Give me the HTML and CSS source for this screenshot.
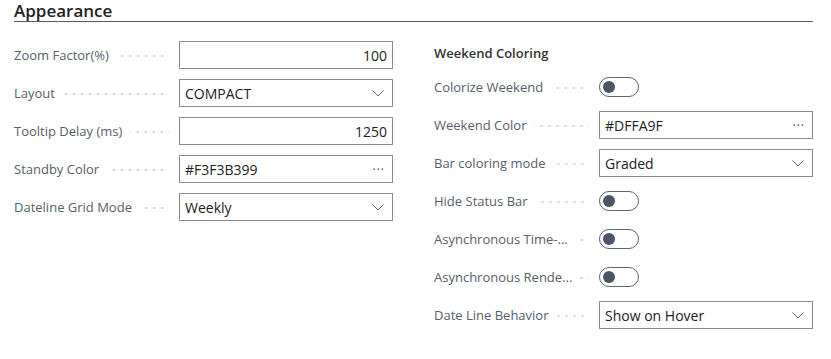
FILE: index.html
```html
<!DOCTYPE html>
<html lang="en">
<head>
    <meta charset="UTF-8">
    <meta name="viewport" content="width=device-width, initial-scale=1.0">
    <title>Appearance</title>
    <link rel="stylesheet" href="styles.css">
</head>
<body>
    <div class="group">
        <h2 class="group-title">Appearance</h2>

        <div class="columns">
            <!-- left column -->
            <div class="column">
                <div class="field">
                    <span class="label">Zoom Factor(%)</span><span class="leader"></span>
                    <div class="box number">100</div>
                </div>
                <div class="field">
                    <span class="label">Layout</span><span class="leader"></span>
                    <div class="box"><span class="value">COMPACT</span><svg class="chevron" width="12" height="7" viewBox="0 0 12 7"><polyline points="0.5,0.5 6,6 11.5,0.5" /></svg></div>
                </div>
                <div class="field">
                    <span class="label">Tooltip Delay (ms)</span><span class="leader"></span>
                    <div class="box number">1250</div>
                </div>
                <div class="field">
                    <span class="label">Standby Color</span><span class="leader"></span>
                    <div class="box"><span class="value">#F3F3B399</span><span class="more">···</span></div>
                </div>
                <div class="field">
                    <span class="label">Dateline Grid Mode</span><span class="leader"></span>
                    <div class="box"><span class="value">Weekly</span><svg class="chevron" width="12" height="7" viewBox="0 0 12 7"><polyline points="0.5,0.5 6,6 11.5,0.5" /></svg></div>
                </div>
            </div>

            <!-- right column -->
            <div class="column">
                <h3 class="sub-title">Weekend Coloring</h3>
                <div class="field">
                    <span class="label">Colorize Weekend</span><span class="leader"></span>
                    <div class="toggle-cell"><span class="toggle"></span></div>
                </div>
                <div class="field">
                    <span class="label">Weekend Color</span><span class="leader"></span>
                    <div class="box"><span class="value">#DFFA9F</span><span class="more">···</span></div>
                </div>
                <div class="field">
                    <span class="label">Bar coloring mode</span><span class="leader"></span>
                    <div class="box"><span class="value">Graded</span><svg class="chevron" width="12" height="7" viewBox="0 0 12 7"><polyline points="0.5,0.5 6,6 11.5,0.5" /></svg></div>
                </div>
                <div class="field">
                    <span class="label">Hide Status Bar</span><span class="leader"></span>
                    <div class="toggle-cell"><span class="toggle"></span></div>
                </div>
                <div class="field">
                    <span class="label">Asynchronous Time-...</span><span class="leader"></span>
                    <div class="toggle-cell"><span class="toggle"></span></div>
                </div>
                <div class="field">
                    <span class="label">Asynchronous Rende...</span><span class="leader"></span>
                    <div class="toggle-cell"><span class="toggle"></span></div>
                </div>
                <div class="field">
                    <span class="label">Date Line Behavior</span><span class="leader"></span>
                    <div class="box"><span class="value">Show on Hover</span><svg class="chevron" width="12" height="7" viewBox="0 0 12 7"><polyline points="0.5,0.5 6,6 11.5,0.5" /></svg></div>
                </div>
            </div>
        </div>
    </div>
</body>
</html>
```

FILE: styles.css
```css
body {
    margin: 0;
    font-family: "Segoe UI", "Open Sans", sans-serif;
    font-size: 13px;
    background-color: #ffffff;
    color: #212121;
}
.group {
    width: 799px;
    padding-left: 14px;
}
.group-title {
    margin: 0;
    font-size: 17px;
    font-weight: 600;
    line-height: 22px;
    height: 21px;
    border-bottom: 1px solid #4e5d6c;
    color: #212121;
}
.columns {
    display: grid;
    grid-template-columns: 379px 379px;
    column-gap: 41px;
    padding-top: 19px;
}
.column {
    display: flex;
    flex-direction: column;
    gap: 10px;
}
.sub-title {
    margin: 0;
    height: 22px;
    line-height: 24px;
    font-size: 13px;
    font-weight: 600;
    color: #333333;
}
.field {
    display: flex;
    align-items: center;
    height: 28px;
}
.label {
    color: #56606c;
    white-space: nowrap;
    padding-right: 8px;
}
.leader {
    flex: 1;
    height: 2px;
    margin-right: 10px;
    margin-top: 2px;
    background-image: linear-gradient(to right, #d2d2d2 2px, transparent 2px);
    background-size: 8px 2px;
    background-repeat: repeat-x;
    background-position: right center;
}
.box {
    width: 214px;
    height: 28px;
    box-sizing: border-box;
    border: 1px solid #8a8a8a;
    display: flex;
    align-items: center;
    justify-content: space-between;
    padding: 0 8px 0 5px;
    color: #212121;
    font-size: 14px;
}
.box.number {
    justify-content: flex-end;
    padding-right: 5px;
}
.chevron {
    margin-top: 1px;
}
.chevron polyline {
    fill: none;
    stroke: #5a6472;
    stroke-width: 1;
}
.more {
    color: #3c4450;
    font-size: 12px;
    letter-spacing: 1px;
    margin-right: -1px;
}
.toggle-cell {
    width: 214px;
    display: flex;
    align-items: center;
}
.toggle {
    position: relative;
    width: 40px;
    height: 20px;
    box-sizing: border-box;
    border: 1px solid #5c6570;
    border-radius: 10px;
}
.toggle::after {
    content: "";
    position: absolute;
    left: 3px;
    top: 3px;
    width: 12px;
    height: 12px;
    border-radius: 50%;
    background-color: #4b5566;
}
```
